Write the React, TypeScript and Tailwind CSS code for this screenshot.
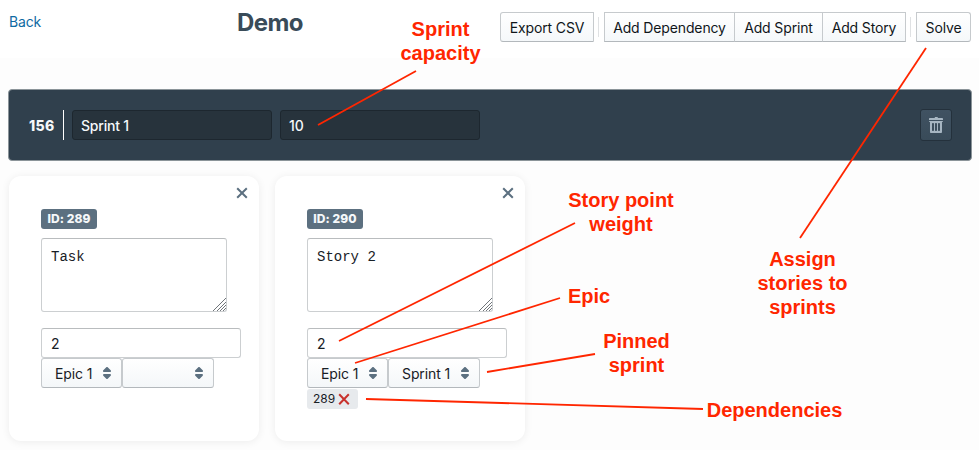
import type { ReactNode } from "react";

const CARET =
  "M5 7h6a1.003 1.003 0 00.71-1.71l-3-3C8.53 2.11 8.28 2 8 2s-.53.11-.71.29l-3 3A1.003 1.003 0 005 7zm6 2H5a1.003 1.003 0 00-.71 1.71l3 3c.18.18.43.29.71.29s.53-.11.71-.29l3-3A1.003 1.003 0 0011 9z";
const TRASH =
  "M14.49 3.99h-13c-.28 0-.5.22-.5.5s.22.5.5.5h.5v10c0 .55.45 1 1 1h10c.55 0 1-.45 1-1v-10h.5c.28 0 .5-.22.5-.5s-.22-.5-.5-.5zm-8.5 9c0 .55-.45 1-1 1s-1-.45-1-1v-6c0-.55.45-1 1-1s1 .45 1 1v6zm3 0c0 .55-.45 1-1 1s-1-.45-1-1v-6c0-.55.45-1 1-1s1 .45 1 1v6zm3 0c0 .55-.45 1-1 1s-1-.45-1-1v-6c0-.55.45-1 1-1s1 .45 1 1v6zm2-12h-4c0-.55-.45-1-1-1h-2c0 .55-.45 1-1 1h-4c-.55 0-1 .45-1 1v1h14v-1c0-.55-.45-1-1-1z";

function ToolButton({ children, className }: { children: ReactNode; className: string }) {
  return (
    <button
      className={`h-[30px] shrink-0 whitespace-nowrap border border-[#c6cacd] border-b-[#b3b8bc] bg-gradient-to-b from-white to-[#f5f8fa] pt-0.5 text-sm leading-none tracking-[-0.14px] text-[#10161a] ${className}`}
    >
      {children}
    </button>
  );
}

function Divider() {
  return <span className="mx-1 h-5 w-px shrink-0 bg-[#dfe1e3]" />;
}

function Select({ value, className }: { value: string; className: string }) {
  return (
    <div
      className={`flex h-[30px] items-center justify-between rounded-[3px] border border-[#c6cacd] border-b-[#b3b8bc] bg-gradient-to-b from-white to-[#f4f7f9] pl-[13px] pr-1.5 ${className}`}
    >
      <span className="whitespace-nowrap pt-0.5 tracking-[-0.1px]">{value}</span>
      <svg viewBox="0 0 16 16" className="size-4 fill-[#5c7080]">
        <path d={CARET} />
      </svg>
    </div>
  );
}

type Story = { id: string; text: string; sprint: string; dependency?: string };

function StoryCard({ id, text, sprint, dependency }: Story) {
  return (
    <article className="h-[265px] w-[250px] rounded-xl bg-white pl-8 shadow-[0_1px_8px_rgba(0,0,0,0.07)]">
      <div className="flex h-[33px] items-start justify-end pr-[11px] pt-[11px]">
        <svg viewBox="0 0 12 12" className="size-3 fill-none stroke-[#5c7080] stroke-2">
          <path d="M1.2 1.2l9.6 9.6M10.8 1.2l-9.6 9.6" />
        </svg>
      </div>
      <div className="flex h-5 w-14 items-center justify-center rounded-[3px] bg-[#5c7080] text-xs font-extrabold tracking-[0.1px] text-[#f5f8fa]">
        ID: {id}
      </div>
      <div className="mt-[9px] flex h-[74px] w-[186px] items-end justify-between rounded-[3px] border border-[#cccfd1] border-t-[#b9bcbe] bg-white pl-[9px]">
        <span className="self-start pt-[9px] font-['Liberation_Mono',monospace] text-[14px] leading-[18px]">
          {text}
        </span>
        <svg viewBox="0 0 13 13" className="size-[13px] fill-none stroke-[#70757a] stroke-1">
          <path d="M0 13L13 0M4 13L13 4M7 13L13 7M10 13L13 10" />
        </svg>
      </div>
      <div className="mt-4 flex h-[30px] w-[200px] items-center rounded-[3px] border border-[#cccfd1] border-t-[#b9bcbe] bg-white px-[9px] pt-0.5">
        2
      </div>
      <div className="flex">
        <Select value="Epic 1" className="w-[81px]" />
        <Select value={sprint} className="w-[92px]" />
      </div>
      {dependency && (
        <div className="mt-px flex h-5 w-[51px] items-center gap-[3px] rounded-[3px] bg-[#e7eaed] pl-1.5 text-xs">
          {dependency}
          <svg viewBox="0 0 12 12" className="size-3 fill-none stroke-[#c8322d] stroke-2">
            <path d="M1.2 1.2l9.6 10M10.8 1.2l-9.6 10" />
          </svg>
        </div>
      )}
    </article>
  );
}

const pointers = [
  [416, 71, 318, 125],
  [926, 48, 800, 238],
  [575, 223, 339, 341],
  [560, 298, 355, 363],
  [595, 354, 487, 372],
  [703, 409, 366, 399],
];

function Note({ lines, className }: { lines: string[]; className: string }) {
  return (
    <div
      className={`absolute -translate-x-1/2 whitespace-nowrap text-center font-['Liberation_Sans',sans-serif] text-[20px] font-bold leading-6 text-[#ff2600] ${className}`}
    >
      {lines.map((line) => (
        <div key={line}>{line}</div>
      ))}
    </div>
  );
}

export default function App() {
  return (
    <div className="relative h-[450px] w-[979px] overflow-hidden bg-[#fdfdfd] font-['Inter',sans-serif] text-sm text-[#182026]">
      <header className="flex h-[58px] items-start bg-white pl-[9px] pr-2">
        <a className="w-[228px] pt-3 tracking-[-0.15px] text-[#106ba3]">Back</a>
        <h1 className="w-[263px] pt-[7px] text-2xl font-bold leading-8 tracking-[-0.6px] text-[#394b59]">Demo</h1>
        <div className="flex items-center pt-3">
          <ToolButton className="w-[94px] rounded-l-[3px]">Export CSV</ToolButton>
          <Divider />
          <ToolButton className="ml-px w-[131px]">Add Dependency</ToolButton>
          <ToolButton className="-ml-px w-[89px]">Add Sprint</ToolButton>
          <ToolButton className="-ml-px w-[84px]">Add Story</ToolButton>
          <Divider />
          <ToolButton className="ml-px w-[55px] rounded-r-[3px]">Solve</ToolButton>
        </div>
      </header>

      <section className="mx-2 mt-[31px] flex h-[72px] w-[964px] items-center rounded border border-[#8b9499] bg-[#30404d] pl-5 pr-[19px] text-[#f5f8fa]">
        <span className="w-[34px] pt-0.5 text-sm font-extrabold tracking-[0.3px]">156</span>
        <span className="h-[30px] w-px bg-white" />
        <div className="ml-2 flex h-[30px] w-[200px] items-center rounded-[3px] border border-[#1d272f] bg-[#27333c] px-2 pt-0.5 font-medium tracking-[-0.2px]">
          Sprint 1
        </div>
        <div className="ml-2 flex h-[30px] w-[200px] items-center rounded-[3px] border border-[#1d272f] bg-[#27333c] px-2 pt-0.5 font-medium">
          10
        </div>
        <button className="ml-auto flex size-8 items-center justify-center rounded-[3px] border border-[#24313c] bg-gradient-to-b from-[#405262] to-[#394b59]">
          <svg viewBox="0 0 16 16" className="size-4 fill-[#a7b6c2]">
            <path d={TRASH} />
          </svg>
        </button>
      </section>

      <main className="ml-[9px] mt-[15px] flex gap-4">
        <StoryCard id="289" text="Task" sprint="" />
        <StoryCard id="290" text="Story 2" sprint="Sprint 1" dependency="289" />
      </main>

      <svg viewBox="0 0 979 450" className="pointer-events-none absolute inset-0 h-[450px] w-[979px] stroke-[#ff2600] stroke-[1.8]">
        {pointers.map(([x1, y1, x2, y2]) => (
          <line key={x1} x1={x1} y1={y1} x2={x2} y2={y2} />
        ))}
      </svg>
      <Note lines={["Sprint", "capacity"]} className="left-[440.5px] top-[17px]" />
      <Note lines={["Story point", "weight"]} className="left-[621px] top-[188px]" />
      <Note lines={["Epic"]} className="left-[589px] top-[284px]" />
      <Note lines={["Pinned", "sprint"]} className="left-[636.5px] top-[329px]" />
      <Note lines={["Dependencies"]} className="left-[774.5px] top-[398px]" />
      <Note lines={["Assign", "stories to", "sprints"]} className="left-[802.5px] top-[247px]" />
    </div>
  );
}
